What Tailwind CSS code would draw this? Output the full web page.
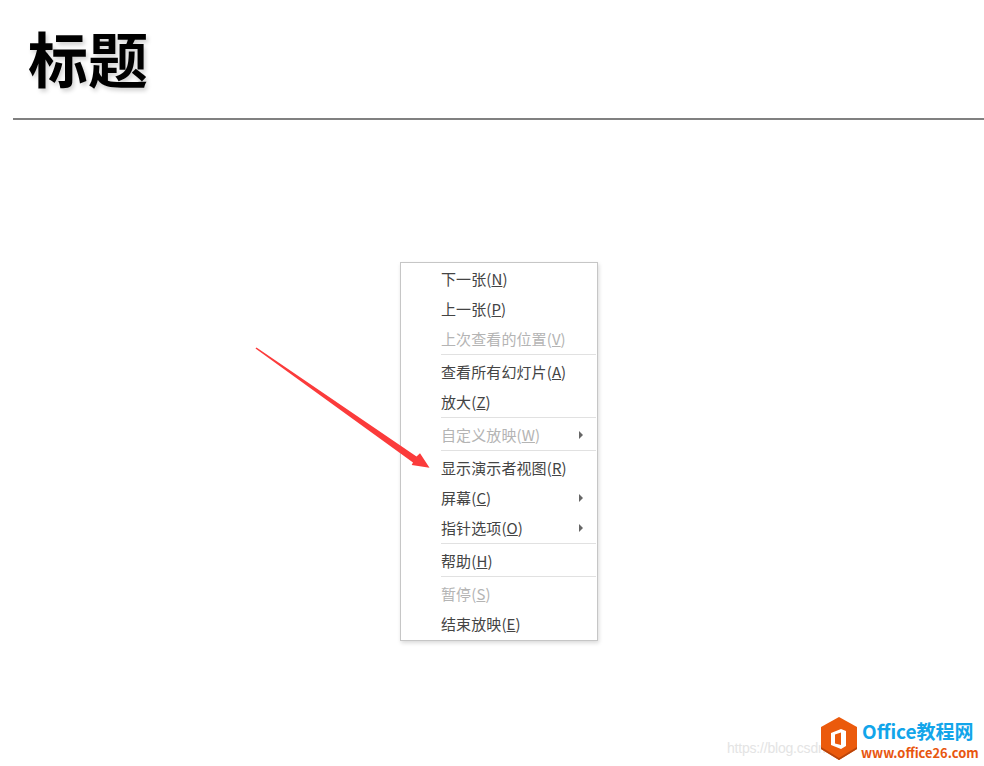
<!DOCTYPE html>
<html lang="zh-CN">
<head>
    <meta charset="UTF-8">
    <title>标题</title>
    <script src="https://cdn.jsdelivr.net/npm/@tailwindcss/browser@4"></script>
</head>
<body class="relative h-[766px] w-[984px] overflow-hidden bg-white font-['Noto_Sans_CJK_SC',sans-serif]">
    <!-- Slide title -->
    <header class="ml-[13px] h-[120px] border-b-2 border-[#808080] pl-[15px] pt-[13px]">
        <h1 class="text-[60px] leading-[88px] font-bold text-black [text-shadow:2px_3px_4px_rgba(0,0,0,0.18)]">标题</h1>
    </header>

    <!-- Context menu -->
    <div class="absolute left-[400px] top-[262px] w-[198px] border border-[#c6c6c6] bg-white py-[1px] text-[15px] tracking-[0.1px] text-[#444444] shadow-[1px_2px_4px_rgba(0,0,0,0.15)]">
        <div class="flex h-[30px] items-center pl-[40px]"><span>下一张(<u>N</u>)</span></div>
        <div class="flex h-[30px] items-center pl-[40px]"><span>上一张(<u>P</u>)</span></div>
        <div class="flex h-[30px] items-center pl-[40px] text-[#b4b4b4]"><span>上次查看的位置(<u>V</u>)</span></div>
        <div class="mb-[2px] ml-[40px] mr-[1px] h-px bg-[#e1e1e1]"></div>
        <div class="flex h-[30px] items-center pl-[40px]"><span>查看所有幻灯片(<u>A</u>)</span></div>
        <div class="flex h-[30px] items-center pl-[40px]"><span>放大(<u>Z</u>)</span></div>
        <div class="mb-[2px] ml-[40px] mr-[1px] h-px bg-[#e1e1e1]"></div>
        <div class="flex h-[30px] items-center justify-between pl-[40px] pr-[14px] text-[#b4b4b4]">
            <span>自定义放映(<u>W</u>)</span>
            <span class="h-0 w-0 border-y-[4px] border-l-[4px] border-y-transparent border-l-[#666666]"></span>
        </div>
        <div class="mb-[2px] ml-[40px] mr-[1px] h-px bg-[#e1e1e1]"></div>
        <div class="flex h-[30px] items-center pl-[40px]"><span>显示演示者视图(<u>R</u>)</span></div>
        <div class="flex h-[30px] items-center justify-between pl-[40px] pr-[14px]">
            <span>屏幕(<u>C</u>)</span>
            <span class="h-0 w-0 border-y-[4px] border-l-[4px] border-y-transparent border-l-[#666666]"></span>
        </div>
        <div class="flex h-[30px] items-center justify-between pl-[40px] pr-[14px]">
            <span>指针选项(<u>O</u>)</span>
            <span class="h-0 w-0 border-y-[4px] border-l-[4px] border-y-transparent border-l-[#666666]"></span>
        </div>
        <div class="mb-[2px] ml-[40px] mr-[1px] h-px bg-[#e1e1e1]"></div>
        <div class="flex h-[30px] items-center pl-[40px]"><span>帮助(<u>H</u>)</span></div>
        <div class="mb-[2px] ml-[40px] mr-[1px] h-px bg-[#e1e1e1]"></div>
        <div class="flex h-[30px] items-center pl-[40px] text-[#b4b4b4]"><span>暂停(<u>S</u>)</span></div>
        <div class="flex h-[30px] items-center pl-[40px]"><span>结束放映(<u>E</u>)</span></div>
    </div>

    <!-- Red arrow, lies over the menu edge -->
    <svg class="absolute left-[250px] top-[340px] z-10" width="190" height="135" viewBox="250 340 190 135">
        <path d="M255.5 348.5 L256.5 347.5 L416.5 456.5 L420 453.3 L429.5 467.7 L411.7 465 L413 462.5 Z" fill="#fb3b3b" />
    </svg>

    <!-- Watermark -->
    <div class="absolute left-[727px] top-[737px] whitespace-nowrap font-['Liberation_Sans',sans-serif] text-[14px] leading-[22px] tracking-[-0.2px] text-[#e4e4e4]">https://blog.csdn.net</div>

    <!-- Logo -->
    <svg class="absolute left-[820px] top-[716px]" width="38" height="46" viewBox="0 0 38 46">
        <path d="M19 1 L37 11 L37 33 L19 44 L1 33 L1 11 Z" fill="#eb5a0c" />
        <path d="M1 31 L19 42 L37 31 L37 33 L19 44 L1 33 Z" fill="#b9450b" />
        <path fill-rule="evenodd" d="M11 17 L21 13 L26 15 L26 30 L21 33 L11 29 Z M15 18.5 L21 16.5 L21 29 L15 27.5 Z" fill="#ffffff" />
    </svg>
    <div class="absolute left-[861px] top-[718px] font-bold">
        <div class="pl-[1px] text-[19px] leading-[26px] whitespace-nowrap text-[#12a5ea]">Office教程网</div>
        <div class="text-[12.9px] leading-[17px] whitespace-nowrap text-[#e8560f]">www.office26.com</div>
    </div>
</body>
</html>
